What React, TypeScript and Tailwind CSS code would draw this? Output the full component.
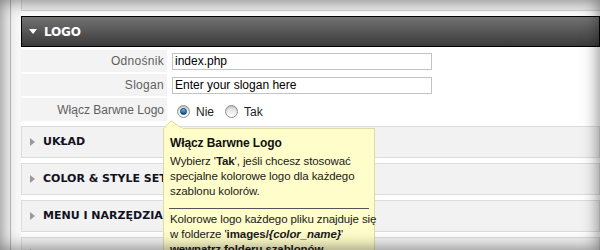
import React from "react";

const rows = [
  { label: "Odnośnik", value: "index.php" },
  { label: "Slogan", value: "Enter your slogan here" },
];

const panels = ["UKŁAD", "COLOR & STYLE SETTINGS", "MENU I NARZĘDZIA", ""];

function Radio({ checked, label }: { checked?: boolean; label: string }) {
  return (
    <label className="flex items-center">
      <span className="flex items-center justify-center w-[13px] h-[13px] rounded-full border border-[#8f8f8f] bg-gradient-to-b from-[#d8d8d8] to-[#ffffff] shadow-[inset_0_1px_1px_rgba(0,0,0,0.15)]">
        {checked && (
          <span className="w-[7px] h-[7px] rounded-full bg-gradient-to-b from-[#6fb3e8] to-[#0d4e8c] border border-[#0a3a6b]" />
        )}
      </span>
      <span className="ml-[6px] text-[12px] text-[#222]">{label}</span>
    </label>
  );
}

function Tooltip() {
  return (
    <div className="absolute left-[163px] top-[128px] w-[212px] h-[140px]">
      <svg
        className="absolute left-0 -top-[8px]"
        width="22"
        height="9"
        viewBox="0 0 22 9"
      >
        <path d="M0.5 9 L8 0.8 L20 9 Z" fill="#fffdca" stroke="#dedaa3" />
        <rect x="1" y="8" width="19" height="2" fill="#fffdca" />
      </svg>
      <div className="h-full bg-[#fffdca] border border-[#dedaa3] pt-[7px] px-[6px] text-[11.5px] leading-[15px] text-[#1a1a1a] whitespace-nowrap tracking-[-0.1px]">
        <div className="font-bold text-[12px] text-[#111] mb-[3px]">
          Włącz Barwne Logo
        </div>
        <p>
          Wybierz '<b>Tak</b>', jeśli chcesz stosować
          <br />
          specjalne kolorowe logo dla każdego
          <br />
          szablonu kolorów.
        </p>
        <div className="border-t border-[#555] mt-[9px] mb-[3px] mx-[-1px]" />
        <p>
          Kolorowe logo każdego pliku znajduje się
          <br />w folderze '
          <b>
            images/<i>{"{color_name}"}</i>
          </b>
          '
          <br />
          <b>wewnątrz folderu szablonów</b>
        </p>
      </div>
    </div>
  );
}

export default function App() {
  return (
    <div className="relative w-[600px] h-[250px] overflow-hidden bg-[#f6f6f6] font-['Liberation_Sans',Arial,sans-serif]">
      <div className="ml-[10px] h-full border-l border-[#bdbdbd] pl-[10px] bg-[#f8f8f8]">
        <div className="h-full bg-white">
          {/* previous panel tail */}
          <div className="h-[11px] bg-[#efefef] border-l border-b border-[#d4d4d4]" />

          <div className="mt-[5px] h-[31px] border border-black bg-gradient-to-b from-[#737373] to-[#3b3b3b] flex items-center pl-[7px]">
            <svg width="8" height="5" viewBox="0 0 8 5" className="mr-[7px]">
              <path d="M0 0 L8 0 L4 5 Z" fill="#fff" />
            </svg>
            <span className="text-white font-bold text-[12px] font-['DejaVu_Sans',Verdana,sans-serif] tracking-[-0.2px]">
              LOGO
            </span>
          </div>

          <div className="mt-[3px] flex flex-col gap-[2px]">
            {rows.map((r) => (
              <div key={r.label} className="flex h-[22px]">
                <div className="w-[146px] bg-[#f3f3f3] flex items-center justify-end pr-[3px] text-[12px] text-[#5f5f5f] tracking-[0.3px]">
                  {r.label}
                </div>
                <div className="flex items-center pl-[5px]">
                  <div className="w-[260px] h-[17px] border border-[#c3c3c3] bg-white flex items-center pl-[2px] text-[12px] text-black">
                    {r.value}
                  </div>
                </div>
              </div>
            ))}
            <div className="flex h-[23px]">
              <div className="w-[146px] bg-[#f3f3f3] flex items-center justify-end pr-[3px] text-[12px] text-[#5f5f5f]">
                Włącz Barwne Logo
              </div>
              <div className="flex items-center pl-[10px] pt-[4px] gap-[11px]">
                <Radio checked label="Nie" />
                <Radio label="Tak" />
              </div>
            </div>
          </div>

          <div className="mt-[5px] flex flex-col gap-[5px]">
            {panels.map((p, i) => (
              <div
                key={i}
                className="h-[32px] bg-[#f2f2f2] border border-[#dcdcdc] flex items-center pl-[8px]"
              >
                <svg width="5" height="8" viewBox="0 0 5 8" className="mr-[8px]">
                  <path d="M0 0 L5 4 L0 8 Z" fill="#9a9a9a" />
                </svg>
                {p && (
                  <span className="font-bold text-[11px] text-[#111122] font-['DejaVu_Sans',Verdana,sans-serif]">
                    {p}
                  </span>
                )}
              </div>
            ))}
          </div>
        </div>
      </div>

      <Tooltip />

      <div className="pointer-events-none absolute inset-0 shadow-[inset_0_0_18px_rgba(0,0,0,0.55)]" />
    </div>
  );
}
